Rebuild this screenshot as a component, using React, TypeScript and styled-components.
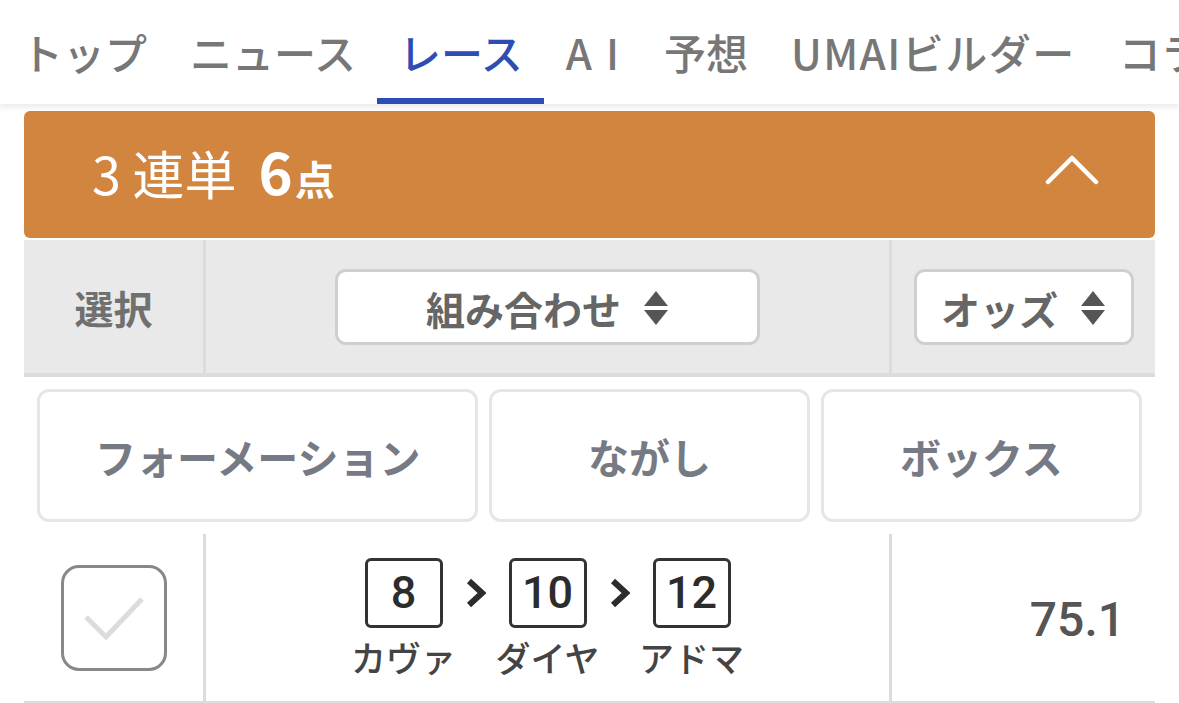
import React from "react";
import styled, { createGlobalStyle } from "styled-components";

const GlobalStyle = createGlobalStyle`
  html, body {
    margin: 0;
    padding: 0;
    background: #ffffff;
    font-family: "Noto Sans CJK JP", "Noto Sans", sans-serif;
  }
`;

const Page = styled.div`
  width: 1179px;
  height: 703px;
  overflow: hidden;
  background: #ffffff;
`;

const Nav = styled.nav`
  position: relative;
  z-index: 1;
  height: 104px;
  display: flex;
  align-items: stretch;
  overflow: hidden;
  background: #ffffff;
  box-shadow: 0 3px 7px rgba(0, 0, 0, 0.09);
  margin-left: -1px;
`;

const NavItem = styled.div<{ active?: boolean; spacing?: number; pull?: number }>`
  flex: none;
  display: flex;
  align-items: center;
  padding: 4px 21px 0 22px;
  margin-right: ${(p) => p.pull || 0}px;
  font-size: 42px;
  font-weight: 500;
  letter-spacing: ${(p) => p.spacing || 0}px;
  color: ${(p) => (p.active ? "#2d4db4" : "#777777")};
  border-bottom: 6px solid ${(p) => (p.active ? "#2d4db4" : "transparent")};
  box-sizing: border-box;
  white-space: nowrap;
`;

const Content = styled.div`
  padding: 7px 24px 0;
`;

const BetHeader = styled.div`
  height: 127px;
  background: #d2853f;
  border-radius: 6px;
  display: flex;
  align-items: center;
  justify-content: space-between;
  padding: 0 56px 0 68px;
  color: #ffffff;
`;

const BetTitle = styled.div`
  display: flex;
  align-items: baseline;
  font-size: 52px;
  font-weight: 400;
  line-height: 1;
  margin-bottom: 10px;
`;

const BetCount = styled.span`
  font-weight: 700;
  font-size: 58px;
  margin-left: 22px;
`;

const BetUnit = styled.span`
  font-weight: 700;
  font-size: 40px;
  margin-left: 2px;
`;

const Chevron = styled.div`
  display: flex;
  margin-bottom: 10px;
`;

const Row = styled.div<{ head?: boolean }>`
  display: grid;
  grid-template-columns: 179px 686px 1fr;
  height: ${(p) => (p.head ? "133px" : "167px")};
  background: ${(p) => (p.head ? "#e9e9e9" : "#ffffff")};
  border-bottom: ${(p) => (p.head ? "4px" : "3px")} solid #dcdcdc;
  margin-top: ${(p) => (p.head ? "2px" : "0")};
`;

const Cell = styled.div<{ divider?: boolean; align?: string }>`
  display: flex;
  align-items: center;
  justify-content: ${(p) => p.align || "center"};
  border-left: ${(p) => (p.divider ? "3px solid #dcdcdc" : "none")};
`;

const HeadLabel = styled.div`
  font-size: 39px;
  font-weight: 700;
  color: #707070;
`;

const SortButton = styled.div<{ w: number }>`
  width: ${(p) => p.w}px;
  height: 76px;
  box-sizing: border-box;
  background: #ffffff;
  border: 3px solid #cfcfcf;
  border-radius: 11px;
  display: flex;
  align-items: center;
  justify-content: center;
  gap: 22px;
  font-size: 39px;
  font-weight: 700;
  color: #666666;
  padding-top: 2px;
`;

const TabsRow = styled.div`
  display: grid;
  grid-template-columns: 441fr 320fr 321fr;
  gap: 11px;
  padding: 12px 13px 12px;
  background: #ffffff;
`;

const TypeTab = styled.div`
  height: 133px;
  box-sizing: border-box;
  border: 3px solid #e6e6e6;
  border-radius: 12px;
  display: flex;
  align-items: center;
  justify-content: center;
  font-size: 41px;
  font-weight: 700;
  color: #767a85;
`;

const CheckBox = styled.div`
  width: 106px;
  height: 106px;
  box-sizing: border-box;
  border: 3px solid #888888;
  border-radius: 18px;
  display: flex;
  align-items: center;
  justify-content: center;
`;

const Combo = styled.div`
  display: flex;
  align-items: flex-start;
  gap: 23px;
`;

const Horse = styled.div`
  display: flex;
  flex-direction: column;
  align-items: center;
  width: 78px;
`;

const NumBox = styled.div`
  width: 78px;
  height: 70px;
  box-sizing: border-box;
  border: 3px solid #333333;
  border-radius: 6px;
  display: flex;
  align-items: center;
  justify-content: center;
  font-family: "Roboto", "Liberation Sans", sans-serif;
  font-size: 45px;
  font-weight: 500;
  color: #2c2c2c;
`;

const HorseName = styled.div`
  font-size: 35px;
  font-weight: 500;
  color: #444444;
  white-space: nowrap;
  margin-top: 8px;
  line-height: 42px;
`;

const Arrow = styled.div`
  height: 70px;
  display: flex;
  align-items: center;
`;

const Odds = styled.div`
  font-family: "Roboto", "Liberation Sans", sans-serif;
  font-size: 48px;
  font-weight: 500;
  color: #555555;
  padding-right: 30px;
  padding-top: 4px;
`;

const SortIcon = () => (
  <svg width="26" height="36" viewBox="0 0 26 36">
    <polygon points="13,1 25,16 1,16" fill="#555555" />
    <polygon points="1,20 25,20 13,35" fill="#555555" />
  </svg>
);

const ChevronUp = () => (
  <svg width="54" height="32" viewBox="0 0 54 32">
    <polyline
      points="3,28 27,4 51,28"
      fill="none"
      stroke="#ffffff"
      strokeWidth="4.5"
      strokeLinecap="round"
      strokeLinejoin="round"
    />
  </svg>
);

const CheckMark = () => (
  <svg width="64" height="50" viewBox="0 0 64 50">
    <polyline
      points="4,24 24,44 60,6"
      fill="none"
      stroke="#dcdcdc"
      strokeWidth="5"
    />
  </svg>
);

const ArrowIcon = () => (
  <svg width="20" height="30" viewBox="0 0 20 30">
    <polyline
      points="3,3 16,15 3,27"
      fill="none"
      stroke="#2c2c2c"
      strokeWidth="6"
      strokeLinejoin="miter"
    />
  </svg>
);

const navItems = [
  { label: "トップ" },
  { label: "ニュース" },
  { label: "レース", active: true },
  { label: "AI", spacing: 14, pull: -12 },
  { label: "予想" },
  { label: "UMAIビルダー", spacing: 1.5 },
  { label: "コラム" },
];

const horses = [
  { num: 8, name: "カヴァ" },
  { num: 10, name: "ダイヤ" },
  { num: 12, name: "アドマ" },
];

export default function App() {
  return (
    <Page>
      <GlobalStyle />
      <Nav>
        {navItems.map((item) => (
          <NavItem
            key={item.label}
            active={item.active}
            spacing={item.spacing}
            pull={item.pull}
          >
            {item.label}
          </NavItem>
        ))}
      </Nav>
      <Content>
        <BetHeader>
          <BetTitle>
            <span>3 連単</span>
            <BetCount>6</BetCount>
            <BetUnit>点</BetUnit>
          </BetTitle>
          <Chevron>
            <ChevronUp />
          </Chevron>
        </BetHeader>
        <Row head>
          <Cell>
            <HeadLabel>選択</HeadLabel>
          </Cell>
          <Cell divider>
            <SortButton w={425}>
              <span>組み合わせ</span>
              <SortIcon />
            </SortButton>
          </Cell>
          <Cell divider>
            <SortButton w={220}>
              <span>オッズ</span>
              <SortIcon />
            </SortButton>
          </Cell>
        </Row>
        <TabsRow>
          <TypeTab>フォーメーション</TypeTab>
          <TypeTab>ながし</TypeTab>
          <TypeTab>ボックス</TypeTab>
        </TabsRow>
        <Row>
          <Cell>
            <CheckBox>
              <CheckMark />
            </CheckBox>
          </Cell>
          <Cell divider>
            <Combo>
              {horses.map((h, i) => (
                <React.Fragment key={h.num}>
                  {i > 0 && (
                    <Arrow>
                      <ArrowIcon />
                    </Arrow>
                  )}
                  <Horse>
                    <NumBox>{h.num}</NumBox>
                    <HorseName>{h.name}</HorseName>
                  </Horse>
                </React.Fragment>
              ))}
            </Combo>
          </Cell>
          <Cell divider align="flex-end">
            <Odds>75.1</Odds>
          </Cell>
        </Row>
      </Content>
    </Page>
  );
}
